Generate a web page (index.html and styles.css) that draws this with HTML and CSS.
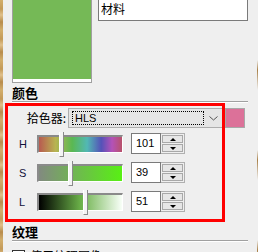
FILE: index.html
```html
<!DOCTYPE html>
<html>
<head>
  <title>颜色</title>
  <link rel="stylesheet" href="styles.css">
</head>
<body>
  <div class="window">
    <div class="wood"></div>
    <div class="panel">
      <div class="top">
        <div class="swatch"><div class="swatch-fill"></div></div>
        <div class="name">材料</div>
      </div>

      <div class="section-title">颜色</div>

      <div class="picker-row">
        <label class="picker-label">拾色器:</label>
        <div class="dropdown">
          <span class="focus-rect">HLS</span>
          <svg class="chevron" width="9" height="5" viewBox="0 0 9 5">
            <polyline points="0.5,0.5 4.5,4 8.5,0.5" fill="none" stroke="#555" stroke-width="1"/>
          </svg>
        </div>
        <div class="preview"></div>
      </div>

      <div class="hls-row">
        <span class="hls-label">H</span>
        <div class="track hue"><div class="thumb" style="left: 20px"></div></div>
        <div class="spin">
          <div class="spin-value">101</div>
          <div class="spin-buttons">
            <div class="spin-btn"><span class="tri-up"></span></div>
            <div class="spin-btn"><span class="tri-down"></span></div>
          </div>
        </div>
      </div>

      <div class="hls-row">
        <span class="hls-label">S</span>
        <div class="track sat"><div class="thumb" style="left: 29px"></div></div>
        <div class="spin">
          <div class="spin-value">39</div>
          <div class="spin-buttons">
            <div class="spin-btn"><span class="tri-up"></span></div>
            <div class="spin-btn"><span class="tri-down"></span></div>
          </div>
        </div>
      </div>

      <div class="hls-row">
        <span class="hls-label">L</span>
        <div class="track lum"><div class="thumb" style="left: 44px"></div></div>
        <div class="spin">
          <div class="spin-value">51</div>
          <div class="spin-buttons">
            <div class="spin-btn"><span class="tri-up"></span></div>
            <div class="spin-btn"><span class="tri-down"></span></div>
          </div>
        </div>
      </div>

      <div class="section-title texture">纹理</div>

      <div class="check-row">
        <span class="checkbox"></span>
        <span>使用纹理图像</span>
      </div>
    </div>
    <div class="wood-edge"></div>
  </div>

  <!-- highlight drawn over the colour picker -->
  <div class="highlight"></div>
</body>
</html>
```

FILE: styles.css
```css
body {
  margin: 0;
  width: 258px;
  height: 252px;
  overflow: hidden;
  background-color: #efefef;
  font-family: "Noto Sans CJK SC", "Liberation Sans", sans-serif;
  font-size: 12px;
  color: #000;
}

.window {
  display: flex;
  height: 252px;
}

.wood {
  width: 3px;
  background: repeating-linear-gradient(180deg, #d2ae6c 0, #c49a58 9px, #e0c08a 15px, #b88c4c 22px, #d2ae6c 30px);
}

.wood-edge {
  width: 1px;
  margin-left: 1px;
  background: repeating-linear-gradient(180deg, #efefef 0, #efefef 60px, #a88048 70px, #efefef 90px);
}

.panel {
  flex: 1;
  padding-left: 9px;
}

.top {
  display: flex;
  gap: 6px;
}

.swatch {
  width: 78px;
  height: 79px;
  border: 1px solid #a0a0a0;
  border-top: none;
  padding-bottom: 3px;
  background-color: #fff;
}

.swatch-fill {
  height: 100%;
  background-color: #75b956;
}

.name {
  width: 146px;
  height: 19px;
  padding: 1px 0 0 2px;
  border: 1px solid #7a7a7a;
  border-top: none;
  background-color: #fff;
  line-height: 16px;
}

.section-title {
  width: 236px;
  margin-top: 2px;
  font-size: 13px;
  font-weight: bold;
  line-height: 16px;
  border-bottom: 1px solid #a0a0a0;
  box-shadow: 0 1px 0 #fff;
}

.section-title.texture {
  margin-top: 12px;
}

.picker-row {
  display: flex;
  align-items: center;
  height: 20px;
  margin-top: 6px;
}

.picker-label {
  width: 54px;
  padding-right: 2px;
  text-align: right;
  line-height: 16px;
}

.dropdown {
  display: flex;
  align-items: center;
  justify-content: space-between;
  box-sizing: border-box;
  width: 156px;
  height: 20px;
  padding: 0 4px 0 3px;
  border: 1px solid #adadad;
  background-color: #e5e5e5;
}

.focus-rect {
  box-sizing: border-box;
  width: 132px;
  height: 14px;
  padding-left: 2px;
  border: 1px dotted #000;
  font-family: "Liberation Sans", sans-serif;
  font-size: 11px;
  line-height: 12px;
}

.chevron {
  display: block;
  margin-right: 1px;
}

.preview {
  box-sizing: border-box;
  width: 20px;
  height: 20px;
  margin-left: 1px;
  border: 1px solid #a8a8a8;
  background-color: #dc7199;
}

.hls-row {
  display: flex;
  align-items: center;
  height: 21px;
  margin-top: 8px;
}

.picker-row + .hls-row {
  margin-top: 5px;
}

.hls-label {
  width: 18px;
  padding-left: 7px;
  font-family: "Liberation Sans", sans-serif;
  font-size: 11px;
  color: #10103a;
}

.track {
  position: relative;
  box-sizing: border-box;
  width: 86px;
  height: 18px;
  border-top: 2px solid #8a8a8a;
  border-left: 2px solid #8a8a8a;
  border-right: 1px solid #fff;
  border-bottom: 1px solid #fff;
}

.track.hue {
  background: linear-gradient(90deg, #b85a50 0%, #b8b452 20%, #5ab852 40%, #52b8b4 58%, #5452b8 75%, #b452b8 88%, #b8526a 100%);
}

.track.sat {
  background: linear-gradient(90deg, #828a80, #58f014);
}

.track.lum {
  background: linear-gradient(90deg, #000, #6ab048 50%, #f8fff8);
}

.thumb {
  position: absolute;
  top: -5px;
  box-sizing: border-box;
  width: 5px;
  height: 25px;
  background-color: #f4f4f4;
  border-right: 1px solid #8a8a8a;
  border-bottom: 1px solid #8a8a8a;
  border-left: 1px solid #fff;
}

.spin {
  display: flex;
  height: 21px;
  margin-left: 8px;
}

.spin-value {
  box-sizing: border-box;
  width: 30px;
  padding-left: 4px;
  border: 1px solid #7a7a7a;
  background-color: #fff;
  font-family: "Liberation Sans", sans-serif;
  font-size: 11px;
  line-height: 19px;
}

.spin-buttons {
  display: flex;
  flex-direction: column;
  gap: 1px;
  padding: 1px;
  border: 1px solid #b0b0b0;
  border-left: none;
  background-color: #efefef;
}

.spin-btn {
  display: flex;
  align-items: center;
  justify-content: center;
  box-sizing: border-box;
  width: 21px;
  height: 9px;
  border: 1px solid #a8a8a8;
  background-color: #e6e6e6;
}

.tri-up {
  border-left: 3px solid transparent;
  border-right: 3px solid transparent;
  border-bottom: 3px solid #000;
}

.tri-down {
  border-left: 3px solid transparent;
  border-right: 3px solid transparent;
  border-top: 3px solid #000;
}

.check-row {
  display: flex;
  align-items: center;
  gap: 5px;
  margin-top: 7px;
  line-height: 16px;
}

.checkbox {
  box-sizing: border-box;
  width: 13px;
  height: 13px;
  border: 1px solid #333;
  background-color: #fff;
}

/* red highlight box over the picker */
.highlight {
  position: absolute;
  left: 5px;
  top: 103px;
  width: 220px;
  height: 119px;
  box-sizing: border-box;
  border: 3px solid #ff0000;
}
```
